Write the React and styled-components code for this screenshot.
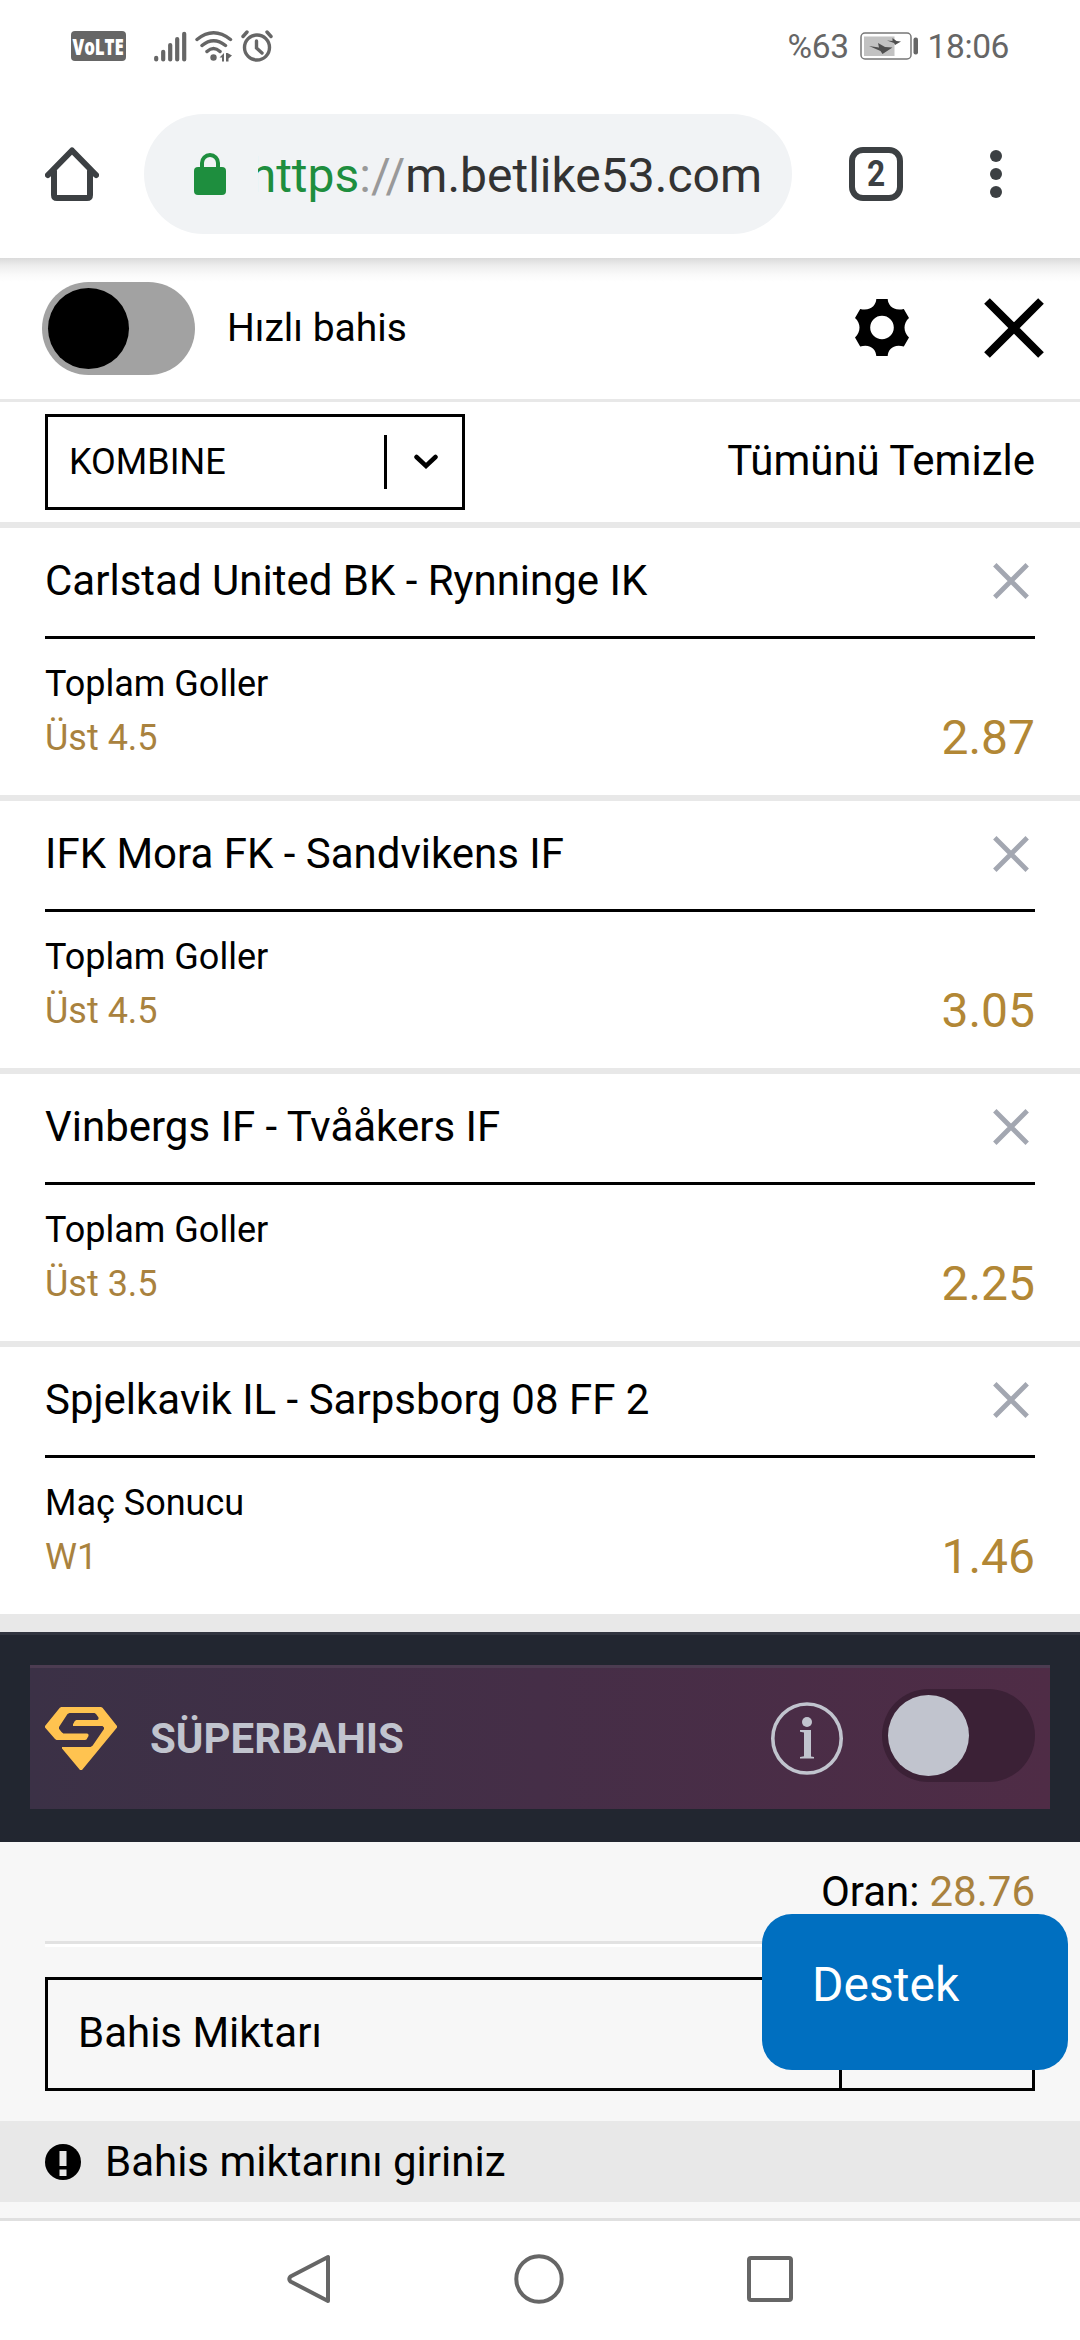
import React from 'react';
import styled, { createGlobalStyle } from 'styled-components';

const GlobalStyle = createGlobalStyle`
  * {
    box-sizing: border-box;
  }
  body {
    margin: 0;
    background: #fff;
    font-family: Roboto, "Liberation Sans", sans-serif;
    color: #000;
  }
  svg {
    display: block;
    flex: none;
  }
`;

const Screen = styled.div`
  display: flex;
  flex-direction: column;
  width: 1080px;
  height: 2340px;
  overflow: hidden;
  background: #fff;
`;

/* phone status bar */

const StatusBar = styled.div`
  display: flex;
  align-items: center;
  height: 92px;
  padding: 0 71px 0 71px;
  color: #666;
  font-size: 33.5px;
`;

const VolteBadge = styled.div`
  display: flex;
  justify-content: center;
  width: 55px;
  height: 30px;
  margin-right: 28px;
  border-radius: 4px;
  background: #666;
  color: #fff;
  font: 800 23px/30px "Open Sans", sans-serif;
  white-space: nowrap;

  span {
    flex: none;
    transform: scaleX(0.73);
  }
`;

const StatusText = styled.span`
  padding-top: 1px;
  letter-spacing: -0.4px;
`;

const StatusIcons = styled.div`
  display: flex;
  align-items: center;
  gap: 8px;
  margin-right: auto;
`;

const Battery = styled.div`
  display: flex;
  margin: 0 9px 0 11px;
`;

/* browser bar */

const BrowserBar = styled.div`
  display: flex;
  align-items: center;
  height: 166px;
  padding: 0 78px 2px 45px;
`;

const AddressPill = styled.div`
  display: flex;
  align-items: center;
  width: 648px;
  height: 120px;
  margin: 0 57px 0 45px;
  padding: 0 30px 0 50px;
  border-radius: 60px;
  background: #f1f3f5;
`;

const Url = styled.div`
  display: flex;
  justify-content: flex-end;
  flex: 1;
  min-width: 0;
  margin-left: 32px;
  padding-top: 3px;
  overflow: hidden;
  font-size: 48px;
  white-space: nowrap;
  color: #333;
`;

const Scheme = styled.span`
  color: ${props => (props.$secure ? '#1e8e3e' : '#999')};
`;

const TabCount = styled.div`
  width: 54px;
  height: 54px;
  margin-right: 87px;
  border: 6px solid #3c4043;
  border-radius: 14px;
  color: #3c4043;
  font-size: 36px;
  font-weight: 700;
  line-height: 42px;
  text-align: center;

  span {
    display: block;
    transform: scaleX(0.88);
  }
`;

/* bet slip */

const SlipHeader = styled.div`
  display: flex;
  align-items: center;
  height: 144px;
  padding: 0 36px 0 42px;
  border-bottom: 3px solid #e8e8e8;
  background: linear-gradient(#dadada, #eee 8px, #fafafa 17px, #fff 24px);
`;

const Track = styled.div`
  width: 153px;
  height: 93px;
  padding: 6px;
  border-radius: 47px;
  background: ${props => props.$track};
`;

const Knob = styled.div`
  width: 81px;
  height: 81px;
  border-radius: 50%;
  background: ${props => props.$color};
`;

const QuickBet = styled.span`
  margin: 0 auto 0 32px;
  padding-bottom: 2px;
  font-size: 39px;
`;

const SlipTools = styled.div`
  display: flex;
  align-items: center;
  gap: 75px;
  padding-bottom: 2px;
`;

const FilterRow = styled.div`
  display: flex;
  align-items: center;
  justify-content: space-between;
  height: 126px;
  padding: 0 45px;
  border-bottom: 6px solid #e8e8e8;
`;

const Select = styled.div`
  display: flex;
  align-items: center;
  width: 420px;
  height: 96px;
  padding: 0 24px 0 21px;
  border: 3px solid #000;
  font-size: 36px;
`;

const SelectDivider = styled.i`
  width: 3px;
  height: 54px;
  margin: 0 27px 0 auto;
  background: #000;
`;

const ClearAll = styled.span`
  padding-bottom: 3px;
  font-size: 42px;
`;

const BetItem = styled.div`
  height: 273px;
  padding: 0 45px;
  border-bottom: 6px solid #e8e8e8;
`;

const BetTitle = styled.div`
  display: flex;
  align-items: center;
  justify-content: space-between;
  height: 111px;
  padding: 0 6px 2px 0;
  border-bottom: 3px solid #000;
  font-size: 42px;

  span {
    padding-bottom: 2px;
  }
`;

const BetBody = styled.div`
  display: flex;
  align-items: flex-end;
  justify-content: space-between;
  padding-top: 18px;
  font-size: 36px;
  line-height: 54px;
`;

const Pick = styled.div`
  color: #a9823e;
`;

const Odds = styled.div`
  color: #b28735;
  font-size: 48px;
`;

const ListEnd = styled.div`
  height: 12px;
  background: #e8e8e8;
`;

const SuperBet = styled.div`
  height: 210px;
  padding: 30px;
  border-top: 3px solid #31343f;
  background: #222630;
`;

const SuperPanel = styled.div`
  display: flex;
  align-items: center;
  height: 144px;
  padding: 0 15px;
  border-top: 3px solid #4c3c51;
  background: linear-gradient(90deg, #3b3146, #452e47 50%, #4f2c46);
`;

const SuperTitle = styled.span`
  margin: 0 auto 0 33px;
  color: #c1c4ce;
  font-size: 42px;
  font-weight: 700;
`;

const SuperSwitch = styled.div`
  margin-left: 39px;
  padding-bottom: 6px;
`;

const Footer = styled.div`
  position: relative;
  height: 376px;
  background: #f7f7f7;
  font-size: 42px;
`;

const TotalOdds = styled.div`
  display: flex;
  align-items: center;
  justify-content: flex-end;
  height: 105px;
  margin: 0 45px 30px;
  padding-bottom: 4px;
  border-bottom: 3px solid #fff;
  box-shadow: inset 0 -3px #e2e2e2;

  b {
    margin-left: 10px;
    color: #a9823e;
    font-weight: 400;
  }
`;

const StakeBox = styled.div`
  display: flex;
  height: 114px;
  margin: 0 45px 30px;
  border: 3px solid #000;
`;

const StakeLabel = styled.div`
  display: flex;
  align-items: center;
  flex: 1;
  padding: 0 0 3px 30px;
`;

const StakeAction = styled.div`
  width: 193px;
  border-left: 3px solid #000;
`;

const Alert = styled.div`
  display: flex;
  align-items: center;
  gap: 24px;
  height: 81px;
  padding: 0 45px;
  background: #e8e8e8;
`;

/* floats over the footer */
const SupportButton = styled.div`
  position: absolute;
  top: 72px;
  right: 12px;
  display: flex;
  align-items: center;
  width: 306px;
  height: 156px;
  padding: 0 0 16px 50px;
  border-radius: 30px;
  background: #006fc0;
  color: #fff;
  font-size: 48px;
`;

const NavBar = styled.div`
  display: flex;
  align-items: center;
  height: 122px;
  padding: 0 287px 4px;
  justify-content: space-between;
  border-top: 3px solid #e0e0e0;
  background: #fff;
`;

const bets = [
    { match: 'Carlstad United BK - Rynninge IK', market: 'Toplam Goller', pick: 'Üst 4.5', odds: '2.87' },
    { match: 'IFK Mora FK - Sandvikens IF', market: 'Toplam Goller', pick: 'Üst 4.5', odds: '3.05' },
    { match: 'Vinbergs IF - Tvååkers IF', market: 'Toplam Goller', pick: 'Üst 3.5', odds: '2.25' },
    { match: 'Spjelkavik IL - Sarpsborg 08 FF 2', market: 'Maç Sonucu', pick: 'W1', odds: '1.46' },
];

const SignalIcon = () => (
    <svg width="33" height="31" viewBox="0 0 33 31" stroke="#666" strokeWidth="4.2" strokeLinecap="round">
        <path d="M2.2 26.8v1.6M9.2 20.8v7.6M16.2 14v14.4M23.2 8v20.4M30.2 2.8v25.6" />
    </svg>
);

const WifiIcon = () => (
    <svg width="38" height="32" viewBox="0 0 38 32" fill="none" stroke="#666" strokeWidth="3.5" strokeLinecap="round">
        <path d="M2 9.5Q18.5 -4 35.5 9.5M7 15.5Q18.5 6 30.5 15.5M12 21.500Q18.5 15.5 25 21.5" />
        <circle cx="18.5" cy="27.5" r="3.2" fill="#666" stroke="none" />
        <path d="M24.500 27.5l4.500-4.500v8.500h-2v-4zM31 23h1.5l4.5 2.5-3.5 3v3H31z" fill="#666" stroke="none" />
    </svg>
);

const AlarmIcon = () => (
    <svg width="32" height="32" viewBox="0 0 32 32" fill="none" stroke="#666" strokeWidth="3.400" strokeLinecap="round">
        <circle cx="16" cy="17.5" r="12.5" />
        <path d="M15.5 11v7l5.500 5M2 6.5l4-4.500M30 6.5L26 2" />
    </svg>
);

const BatteryIcon = () => (
    <svg width="59" height="28" viewBox="0 0 59 28" fill="none">
        <rect x="1" y="1" width="50" height="26" rx="4" stroke="#777" strokeWidth="1.5" />
        <rect x="4" y="4.5" width="30.5" height="19.5" fill="#c2c2c2" />
        <rect x="53.5" y="5.5" width="4.5" height="17" rx="2" fill="#666" />
        <path d="M9 14l10 1.500-1-4.500 7 4 7.500.5-10 6.500-2-3zM27 8.500l5.500.5v-3l4 3 4.500.5-6 3.500-1-2z" fill="#4f4f4f" />
    </svg>
);

const HomeIcon = () => (
    <svg width="54" height="54" viewBox="0 0 54 54" fill="none" stroke="#3c4043" strokeWidth="6" strokeLinecap="round" strokeLinejoin="round">
        <path d="M3 28L27 3.500 51 28M9 24v24q0 3 3 3h30q3 0 3-3V24" />
    </svg>
);

const LockIcon = () => (
    <svg width="32" height="42" viewBox="0 0 32 42">
        <rect y="14" width="32" height="28" rx="4" fill="#1e8e3e" />
        <path d="M8 17v-7a8 8 0 0 1 16 0v7" fill="none" stroke="#1e8e3e" strokeWidth="4" />
    </svg>
);

const MenuDots = () => (
    <svg width="12" height="48" viewBox="0 0 12 48" fill="#3c4043">
        <circle cx="6" cy="6" r="6" />
        <circle cx="6" cy="24" r="6" />
        <circle cx="6" cy="42" r="6" />
    </svg>
);

const GearIcon = () => (
    <svg width="54" height="57" viewBox="0 0 54 57">
        <path
            fillRule="evenodd"
            d="M21.300 0h11.400C33 6 38 12.500 48.800 10L54 19C48 24 48 33 54 38.500L48.800 47.500C38 44.500 33 51 32.700 57H21.300C21 51 16 44.500 5.200 47.500L0 38.500C6 33 6 24 0 19L5.200 10C16 12.500 21 6 21.300 0zM27 16.700a11.800 11.800 0 1 0 0 23.600 11.800 11.800 0 0 0 0-23.600z"
        />
    </svg>
);

const CrossIcon = ({ size, color, weight }) => (
    <svg width={size} height={size} viewBox="0 0 60 60" stroke={color} strokeWidth={weight}>
        <path d="M3 3l54 54M57 3L3 57" />
    </svg>
);

const ChevronIcon = () => (
    <svg width="24" height="16" viewBox="0 0 24 16" fill="none" stroke="#000" strokeWidth="4.5" strokeLinecap="round">
        <path d="M2.500 3L12 12l9.500-9" />
    </svg>
);

const SuperLogo = () => (
    <svg width="72" height="63" viewBox="0 0 72 63" fill="#ffc350">
        <path d="M16.300 0h39.700l1.500.8L72 19v1.500L37 63h-2L17 41.500v-1.500h28.500l2-1.200L59 22v-1.500L57.500 19H28v-1.700L29.800 14l1.500-1h21.200l1-1v-1.500L51 7l-1.500-1H24.500l-2 1L14 20v1.700L16.500 25l1.800 1.500h24l1.200 1v1.500L41.500 32.500 40 33H11.500L10 32 0 20.500V19L14.800.8z" />
    </svg>
);

const InfoIcon = () => (
    <svg width="72" height="73" viewBox="0 0 72 73" fill="#c1c4ce">
        <ellipse cx="36" cy="36.5" rx="34.2" ry="34.5" fill="none" stroke="#c1c4ce" strokeWidth="3.6" />
        <circle cx="36" cy="20" r="5" />
        <path d="M29 28h11v26.500l3 .5v1.500H29V55l4-.8V30.500l-4-.8z" />
    </svg>
);

const AlertIcon = () => (
    <svg width="36" height="36" viewBox="0 0 36 36">
        <circle cx="18" cy="18" r="18" />
        <path d="M14.500 7h7v15h-7zM14.500 25.500h7v6.500h-7z" fill="#e8e8e8" />
    </svg>
);

const Toggle = ({ track, knob }) => (
    <Track $track={track}>
        <Knob $color={knob} />
    </Track>
);

const Bet = ({ match, market, pick, odds }) => (
    <BetItem>
        <BetTitle>
            <span>{match}</span>
            <CrossIcon size={36} color="#a3a7b1" weight={8} />
        </BetTitle>
        <BetBody>
            <div>
                <div>{market}</div>
                <Pick>{pick}</Pick>
            </div>
            <Odds>{odds}</Odds>
        </BetBody>
    </BetItem>
);

const App = () => (
    <Screen>
        <GlobalStyle />
        <StatusBar>
            <VolteBadge><span>VoLTE</span></VolteBadge>
            <StatusIcons>
                <SignalIcon />
                <WifiIcon />
                <AlarmIcon />
            </StatusIcons>
            <StatusText>%63</StatusText>
            <Battery><BatteryIcon /></Battery>
            <StatusText>18:06</StatusText>
        </StatusBar>
        <BrowserBar>
            <HomeIcon />
            <AddressPill>
                <LockIcon />
                <Url>
                    <Scheme $secure>https</Scheme>
                    <Scheme>://</Scheme>
                    m.betlike53.com
                </Url>
            </AddressPill>
            <TabCount><span>2</span></TabCount>
            <MenuDots />
        </BrowserBar>

        <SlipHeader>
            <Toggle track="#a2a2a2" knob="#000" />
            <QuickBet>Hızlı bahis</QuickBet>
            <SlipTools>
                <GearIcon />
                <CrossIcon size={60} color="#000" weight={8} />
            </SlipTools>
        </SlipHeader>
        <FilterRow>
            <Select>
                KOMBINE
                <SelectDivider />
                <ChevronIcon />
            </Select>
            <ClearAll>Tümünü Temizle</ClearAll>
        </FilterRow>

        {bets.map(bet => <Bet key={bet.match} {...bet} />)}
        <ListEnd />

        <SuperBet>
            <SuperPanel>
                <SuperLogo />
                <SuperTitle>SÜPERBAHIS</SuperTitle>
                <InfoIcon />
                <SuperSwitch>
                    <Toggle track="#3b2136" knob="#c1c4ce" />
                </SuperSwitch>
            </SuperPanel>
        </SuperBet>

        <Footer>
            <TotalOdds>Oran: <b>28.76</b></TotalOdds>
            <StakeBox>
                <StakeLabel>Bahis Miktarı</StakeLabel>
                <StakeAction />
            </StakeBox>
            <Alert>
                <AlertIcon />
                Bahis miktarını giriniz
            </Alert>
            <SupportButton>Destek</SupportButton>
        </Footer>

        <NavBar>
            <svg width="44" height="50" viewBox="0 0 44 50" fill="none" stroke="#666" strokeWidth="4" strokeLinejoin="round">
                <path d="M41 3v44L3.500 27.500q-2.500-2.500 0-5z" />
            </svg>
            <svg width="50" height="50" viewBox="0 0 50 50" fill="none" stroke="#666" strokeWidth="4">
                <circle cx="25" cy="25" r="22.7" />
            </svg>
            <svg width="46" height="46" viewBox="0 0 46 46" fill="none" stroke="#666" strokeWidth="4">
                <rect x="2" y="2" width="42" height="42" rx="2" />
            </svg>
        </NavBar>
    </Screen>
);

export default App;
